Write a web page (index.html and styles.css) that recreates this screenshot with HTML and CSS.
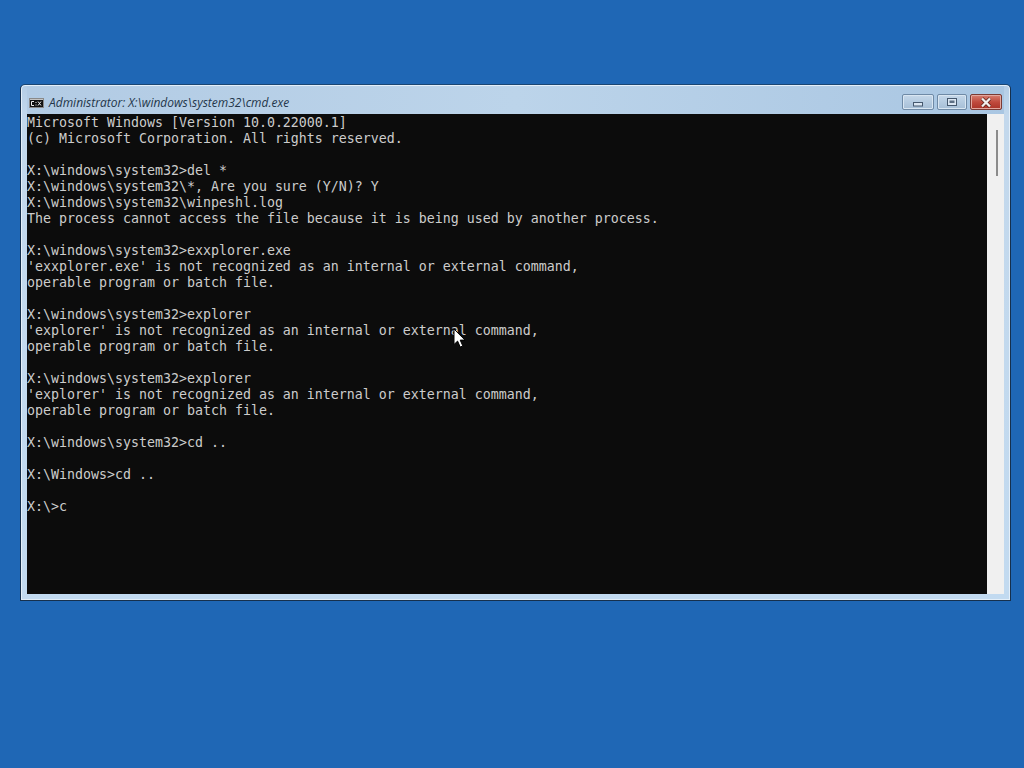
FILE: index.html
```html
<!DOCTYPE html>
<html lang="en">
<head>
<meta charset="utf-8">
<title>cmd.exe</title>
<link rel="stylesheet" href="styles.css">
</head>
<body>
<div class="window">
  <div class="titlebar">
    <svg class="app-icon" width="15" height="10" viewBox="0 0 15 10">
      <rect x="0.5" y="0.5" width="14" height="9" fill="#111" stroke="#8a8a8a"/>
      <rect x="1" y="1" width="13" height="1" fill="#c4c4c4"/>
      <path d="M5 3.5H2.5V7.5H5M7 4v1M7 6.5v1M9 3.5l3 4M12 3.5l-3 4" fill="none" stroke="#eee" stroke-width="1"/>
    </svg>
    <span class="title">Administrator: X:\windows\system32\cmd.exe</span>
    <div class="controls">
      <div class="btn">
        <svg width="12" height="6" viewBox="0 0 12 6"><rect x="1.5" y="1.5" width="9" height="3.5" fill="#dbe6f2" stroke="#45586e"/></svg>
      </div>
      <div class="btn max">
        <svg width="12" height="10" viewBox="0 0 12 10"><rect x="1.5" y="1.5" width="9" height="7" fill="#dbe6f2" stroke="#45586e"/><rect x="3.5" y="3.5" width="5" height="2.5" fill="#5d6f84"/></svg>
      </div>
      <div class="btn close">
        <svg width="14" height="11" viewBox="0 0 14 11"><path d="M3 1.5L11 9.5M11 1.5L3 9.5" stroke="#4b1a14" stroke-width="3.6"/><path d="M3 1.5L11 9.5M11 1.5L3 9.5" stroke="#f4f0ee" stroke-width="2.4"/></svg>
      </div>
    </div>
  </div>
  <div class="client">
    <pre class="console">Microsoft Windows [Version 10.0.22000.1]
(c) Microsoft Corporation. All rights reserved.

X:\windows\system32&gt;del *
X:\windows\system32\*, Are you sure (Y/N)? Y
X:\windows\system32\winpeshl.log
The process cannot access the file because it is being used by another process.

X:\windows\system32&gt;exxplorer.exe
'exxplorer.exe' is not recognized as an internal or external command,
operable program or batch file.

X:\windows\system32&gt;explorer
'explorer' is not recognized as an internal or external command,
operable program or batch file.

X:\windows\system32&gt;explorer
'explorer' is not recognized as an internal or external command,
operable program or batch file.

X:\windows\system32&gt;cd ..

X:\Windows&gt;cd ..

X:\&gt;c</pre>
    <div class="scrollbar"><div class="thumb"></div></div>
  </div>
</div>
<svg class="cursor" width="13" height="21" viewBox="0 0 13 20">
  <path d="M1 0.5V16L4.6 12.6L7.2 18.6L9.8 17.4L7.2 11.6H12Z" fill="#fff" stroke="#000" stroke-width="1"/>
</svg>
</body>
</html>
```
FILE: styles.css
```css
html, body {
  margin: 0;
  height: 100%;
}
body {
  background: #1f67b5;
  overflow: hidden;
  position: relative;
}
.window {
  position: absolute;
  left: 20px;
  top: 84px;
  width: 991px;
  height: 517px;
  box-sizing: border-box;
  display: flex;
  flex-direction: column;
  padding: 1px 6px 6px 6px;
  border: 1px solid #16304d;
  border-top-color: #1b4672;
  border-radius: 5px 5px 0 0;
  background: linear-gradient(#b4cde6 0, #c3d8ec 30px, #c2daf0 100%);
  box-shadow: inset 0 0 0 1px #e4eff9;
}
.titlebar {
  height: 28px;
  display: flex;
  align-items: center;
  flex: none;
  background: linear-gradient(90deg, #b2cbe4, #bcd4ea 50%, #a9c6e2);
}
.app-icon {
  flex: none;
  margin-left: 2px;
  margin-top: 5px;
}
.title {
  font: italic 12px "Open Sans", "Noto Sans", sans-serif;
  color: #24364a;
  margin-left: 5px;
  margin-top: 5px;
}
.controls {
  margin-left: auto;
  margin-right: 2px;
  margin-top: 4px;
  display: flex;
  gap: 3px;
}
.btn {
  width: 32px;
  height: 16px;
  box-sizing: border-box;
  display: flex;
  align-items: flex-end;
  justify-content: center;
  border: 1px solid #6f8aa6;
  border-radius: 2px;
  background: linear-gradient(#c6d8ea, #b5cbe0 50%, #a6bed6);
  box-shadow: inset 0 0 0 1px #d9e6f2;
}
.btn svg {
  margin-bottom: 2px;
}
.btn.max {
  width: 30px;
  align-items: center;
}
.btn.max svg {
  margin-bottom: 1px;
}
.btn.close {
  width: 32px;
  align-items: center;
  border-color: #7a3a34;
  background: linear-gradient(#d67f72, #c04a3d 50%, #aa3328);
  box-shadow: inset 0 0 0 1px #e2a79e;
}
.btn.close svg {
  margin-bottom: 0;
}
.client {
  flex: 1;
  display: flex;
  min-height: 0;
}
.console {
  flex: none;
  width: 960px;
  margin: 0;
  padding-top: 1px;
  background: #0c0c0c;
  color: #cccccc;
  font-family: "DejaVu Sans Mono", "Liberation Mono", monospace;
  font-size: 13.29px;
  line-height: 16px;
  overflow: hidden;
}
.scrollbar {
  flex: 1;
  background: #f0f0f0;
  padding-top: 16px;
  display: flex;
}
.thumb {
  width: 2px;
  height: 46px;
  margin-left: 9px;
  background: #8b8b8b;
}
.cursor {
  position: absolute;
  left: 453px;
  top: 328px;
}
```
